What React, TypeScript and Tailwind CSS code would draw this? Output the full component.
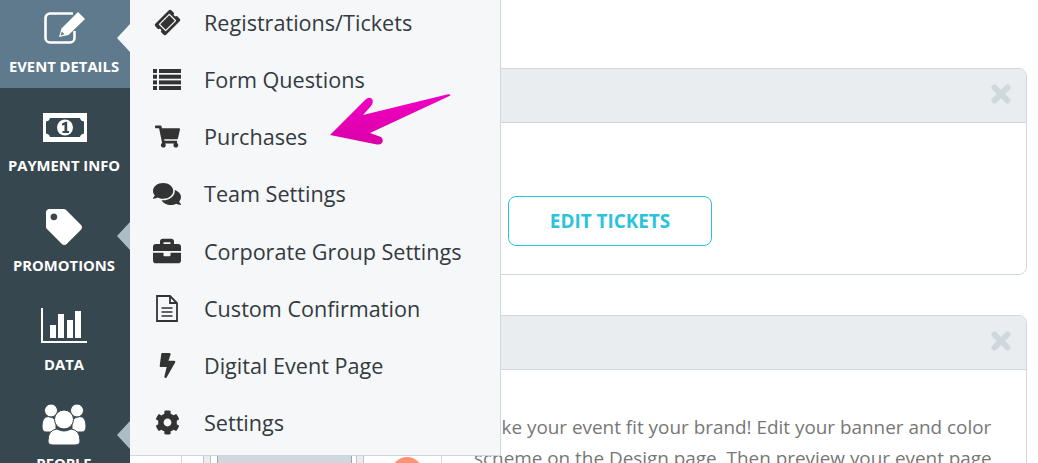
import React from 'react';
import { FaTag, FaTicketAlt, FaShoppingCart, FaComments, FaBriefcase, FaBolt, FaCog } from 'react-icons/fa';

const EditIcon = () => (
  <svg className="w-[42px] h-[33px]" viewBox="0 0 42 33" fill="none">
    <path d="M29 2.500H6A4.500 4.500 0 0 0 1.500 7V27A4.500 4.500 0 0 0 6 31.500H26A4.500 4.500 0 0 0 30.500 27V20" stroke="white" strokeWidth="2.6" />
    <path d="M15 26L17.500 17.500L34 1L41 8L24.500 24Z" fill="white" />
    <path d="M16.500 24.500L17.800 20.500L20.500 23.200Z" fill="#5f7a8c" />
  </svg>
);

const BillIcon = () => (
  <svg className="w-[44px] h-[29px]" viewBox="0 0 44 29">
    <rect width="44" height="29" fill="white" />
    <path d="M7 5H37Q37.500 8 41 8.500V20.500Q37.500 21 37 24H7Q6.500 21 3 20.500V8.500Q6.500 8 7 5Z" fill="#37474f" />
    <circle cx="22" cy="14.500" r="8" fill="white" />
    <path d="M19 10.500L22.800 8.800H24.200V18H26V20H19.500V18H21.500V11.800L19 12.800Z" fill="#37474f" />
  </svg>
);

const ChartIcon = () => (
  <svg className="w-[46px] h-[35px]" viewBox="0 0 46 35" fill="white">
    <rect x="0" y="0" width="2" height="35" />
    <rect x="0" y="33" width="46" height="2" />
    <rect x="9" y="17" width="6" height="13" />
    <rect x="17" y="6" width="6" height="24" />
    <rect x="26" y="12" width="6" height="18" />
    <rect x="34" y="3" width="6" height="27" />
  </svg>
);

const PeopleIcon = () => (
  <svg className="w-[44px] h-[41px]" viewBox="0 0 44 41" fill="white" stroke="#37474f" strokeWidth="1">
    <circle cx="9" cy="6.500" r="6.500" />
    <circle cx="35" cy="6.500" r="6.500" />
    <path d="M0 22Q0 13 6 12.500Q12 13 14 17V28H4Q0 28 0 22Z" />
    <path d="M44 22Q44 13 38 12.500Q32 13 30 17V28H40Q44 28 44 22Z" />
    <circle cx="22" cy="15.500" r="9.500" />
    <path d="M6 37Q6 26 15 25Q22 29 29 25Q38 26 38 37Q38 41 33 41H11Q6 41 6 37Z" />
  </svg>
);

const ListIcon = () => (
  <svg className="w-[28px] h-[21px]" viewBox="0 0 28 21" fill="#333333">
    <rect x="0" y="0" width="4" height="4" />
    <rect x="6" y="0" width="22" height="4" />
    <rect x="0" y="5.700" width="4" height="4" />
    <rect x="6" y="5.700" width="22" height="4" />
    <rect x="0" y="11.400" width="4" height="4" />
    <rect x="6" y="11.400" width="22" height="4" />
    <rect x="0" y="17" width="4" height="4" />
    <rect x="6" y="17" width="22" height="4" />
  </svg>
);

const DocIcon = () => (
  <svg className="w-[24px] h-[27px]" viewBox="0 0 24 27" fill="none" stroke="#333333" strokeWidth="1.800">
    <path d="M2 1H15L22 8V26H2Z" />
    <path d="M15 1V8H22" />
    <path d="M6.500 13H17.500M6.500 17H17.500M6.500 21H17.500" strokeWidth="1.600" />
  </svg>
);

const CloseIcon = () => (
  <svg className="w-[20px] h-[20px]" viewBox="0 0 20 20" stroke="#cfd8dd" strokeWidth="6" strokeLinecap="round">
    <path d="M3.500 3.500L16.500 16.500M16.500 3.500L3.500 16.500" />
  </svg>
);

const SideItem = ({ icon, label, active = false, h = 'h-[99px]', iconClass = '', notchClass = '' }: any) => (
  <div className={`relative flex flex-col items-center text-white ${h} ${active ? 'bg-[#5f7a8c]' : ''}`}>
    <div className={iconClass}>{icon}</div>
    <span className="mr-[2px] text-[14.8px] font-bold leading-none whitespace-nowrap">{label}</span>
    {notchClass && <div className={`absolute right-0 w-[13px] h-[28px] ${notchClass} [clip-path:polygon(100%_0,0_50%,100%_100%)]`} />}
  </div>
);

const menu = [
  { icon: <FaTicketAlt className="rotate-[-45deg] text-[23px]" />, label: 'Registrations/Tickets' },
  { icon: <ListIcon />, label: 'Form Questions' },
  { icon: <FaShoppingCart className="text-[25px]" />, label: 'Purchases' },
  { icon: <FaComments className="text-[28px]" />, label: 'Team Settings' },
  { icon: <FaBriefcase className="text-[28px]" />, label: 'Corporate Group Settings' },
  { icon: <DocIcon />, label: 'Custom Confirmation' },
  { icon: <FaBolt className="text-[25px]" />, label: 'Digital Event Page' },
  { icon: <FaCog className="text-[25px]" />, label: 'Settings' },
];

const Panel = ({ children, className = '' }: any) => (
  <div className={`rounded-[8px] border border-[#cfd8df] bg-white overflow-hidden ${className}`}>
    <div className="h-[54px] bg-[#eaedf0] border-b border-[#cfd8df] flex items-center justify-end pr-[15px] pb-[3px]">
      <CloseIcon />
    </div>
    {children}
  </div>
);

export default function App() {
  return (
    <div className="relative w-[1038px] h-[463px] overflow-hidden bg-white flex font-['Open_Sans',sans-serif]">
      <div className="w-[130px] shrink-0 bg-[#37474f] flex flex-col">
        <SideItem active h="h-[88px]" label="EVENT DETAILS" icon={<EditIcon />} iconClass="mt-[11px] mb-[15px]" notchClass="top-[24px] bg-[#f5f7f9]" />
        <SideItem label="PAYMENT INFO" icon={<BillIcon />} iconClass="mt-[25px] mb-[16px]" />
        <SideItem label="PROMOTIONS" icon={<FaTag className="text-[36px]" />} iconClass="mt-[23px] mb-[13px] mr-[2px]" notchClass="top-[36px] bg-[#aebcc4]" />
        <SideItem label="DATA" icon={<ChartIcon />} iconClass="mt-[23px] mb-[14px] mr-[2px]" />
        <SideItem label="PEOPLE" h="h-[80px]" icon={<PeopleIcon />} iconClass="mt-[21px] mb-[11px] mr-[2px]" notchClass="top-[38px] bg-[#aebcc4]" />
      </div>

      <div className="flex-1 min-w-0 pt-[68px] pl-[51px] pr-[11px]">
        <Panel className="h-[207px]">
          <div className="pt-[73px] pl-[326px]">
            <div className="w-[204px] h-[50px] rounded-[8px] border border-[#29c4dc] flex items-center justify-center text-[#29c4dc] font-bold text-[18.9px]">EDIT TICKETS</div>
          </div>
        </Panel>
        <Panel className="mt-[40px] h-[200px]">
          <div className="flex h-[146px]">
            <div className="w-[260px] shrink-0 border-r border-[#cfd8df] flex items-start pl-[21px] pt-[69px]">
              <div className="w-[8px] h-[100px] bg-[#eaedf0] border border-[#b8c4cb]" />
              <div className="ml-[6px] w-[135px] h-[100px] bg-[#cfd8dc] border-x border-b border-[#9aa7ae]" />
              <div className="ml-[4px] w-[8px] h-[100px] bg-[#eaedf0] border border-[#b8c4cb]" />
              <div className="ml-[27px] mt-[18px] w-[32px] h-[32px] rounded-full bg-[#ff9272]" />
            </div>
            <p className="pl-[32px] pt-[42px] text-[18.9px] text-[#777777] leading-[31px] whitespace-nowrap">
              Make your event fit your brand! Edit your banner and color<br />scheme on the Design page. Then preview your event page
            </p>
          </div>
        </Panel>
      </div>

      <div className="absolute left-[130px] top-0 w-[371px] h-[456px] bg-[#f5f7f9] border-r border-b border-[#cfd8df] text-[#333a40]">
        <div className="flex flex-col mt-[-6px]">
          {menu.map(m => (
            <div key={m.label} className="h-[57.2px] flex items-center">
              <div className="w-[74px] flex justify-center text-[#333333]">{m.icon}</div>
              <span className="text-[21.6px] leading-none whitespace-nowrap">{m.label}</span>
            </div>
          ))}
        </div>
        <svg className="absolute left-[198px] top-[90px]" width="124" height="58" viewBox="0 0 124 58">
          <defs>
            <linearGradient id="arrowFill" x1="0" y1="0" x2="0" y2="1">
              <stop offset="0" stopColor="#f200c4" />
              <stop offset="1" stopColor="#d900a6" />
            </linearGradient>
          </defs>
          <path d="M2 45L37 10Q41 6 44 9Q46 12 43 16L35 25L121 4L122.500 5.500L42 43L53 47Q56 50 54 53Q52 55 49 54.500Z" fill="url(#arrowFill)" />
        </svg>
      </div>
    </div>
  );
}
